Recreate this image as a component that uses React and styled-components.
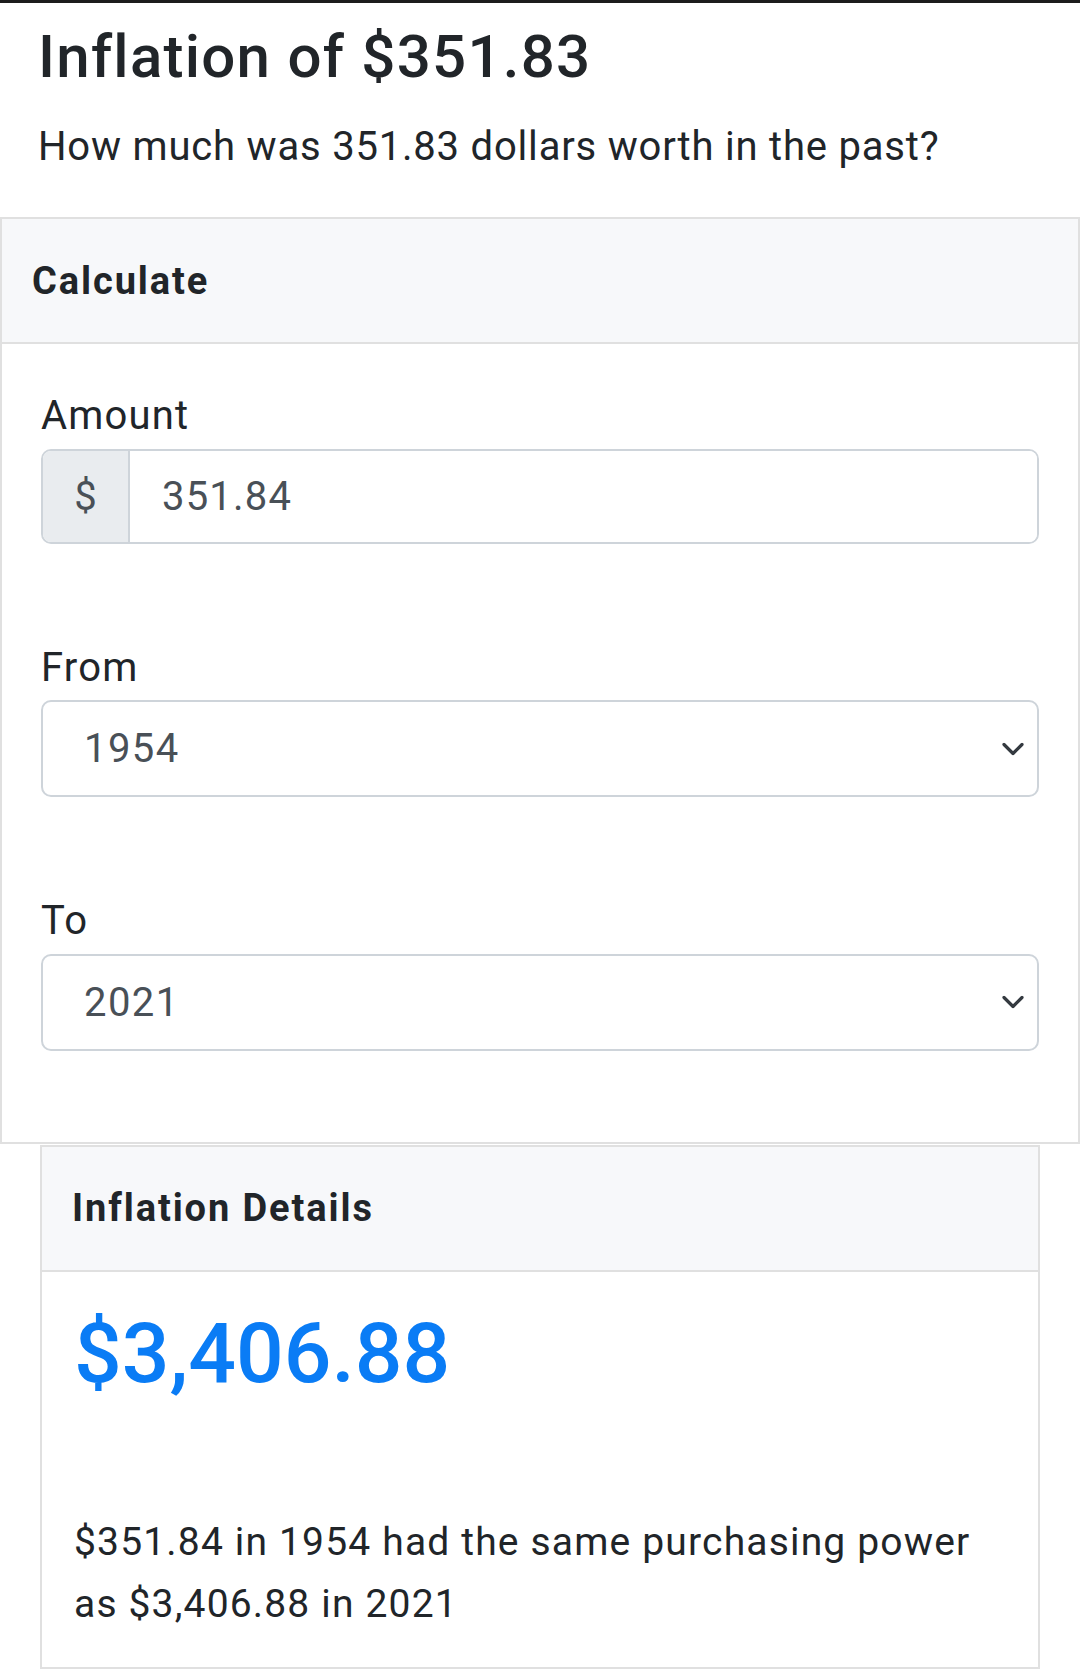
import React from "react";
import styled, { createGlobalStyle } from "styled-components";

const GlobalStyle = createGlobalStyle`
  * {
    box-sizing: border-box;
  }
  body {
    margin: 0;
    background: #ffffff;
    font-family: Roboto, "Liberation Sans", sans-serif;
    color: #212529;
  }
`;

function Chevron() {
  return (
    <svg width="22" height="13" viewBox="0 0 22 13" fill="none">
      <path
        d="M2 2 L11 11 L20 2"
        stroke="#343a40"
        strokeWidth="3.2"
        strokeLinecap="round"
        strokeLinejoin="round"
      />
    </svg>
  );
}

function YearSelect({ value }) {
  return (
    <SelectWrap>
      <Select defaultValue={value}>
        <option value={value}>{value}</option>
      </Select>
      <Arrow>
        <Chevron />
      </Arrow>
    </SelectWrap>
  );
}

export default function App() {
  return (
    <>
      <GlobalStyle />
      <Page>
        <Intro>
          <Title>Inflation of $351.83</Title>
          <Lead>How much was 351.83 dollars worth in the past?</Lead>
        </Intro>

        <Card>
          <CardHeader>Calculate</CardHeader>
          <FormBody>
            <Field>
              <Label>Amount</Label>
              <InputGroup>
                <Prepend>$</Prepend>
                <Input defaultValue="351.84" />
              </InputGroup>
            </Field>
            <Field>
              <Label>From</Label>
              <YearSelect value="1954" />
            </Field>
            <Field>
              <Label>To</Label>
              <YearSelect value="2021" />
            </Field>
          </FormBody>
        </Card>

        <Card inset>
          <CardHeader>Inflation Details</CardHeader>
          <ResultBody>
            <Result>$3,406.88</Result>
            <Summary>
              $351.84 in 1954 had the same purchasing power as $3,406.88 in
              2021
            </Summary>
          </ResultBody>
        </Card>
      </Page>
    </>
  );
}

const Page = styled.div`
  width: 1080px;
  min-height: 1678px;
  border-top: 3px solid #1c1c1c;
  display: flex;
  flex-direction: column;
`;

const Intro = styled.div`
  padding: 18px 38px 40px;
`;

const Title = styled.h1`
  margin: 0;
  font-size: 60px;
  font-weight: 500;
  line-height: 72px;
  letter-spacing: 0.021em;
  color: #212529;
`;

const Lead = styled.p`
  margin: 24px 0 0;
  font-size: 40px;
  line-height: 60px;
  letter-spacing: 0.02em;
  color: #212529;
`;

const Card = styled.div`
  display: flex;
  flex-direction: column;
  border: 2px solid #e0e0e0;
  background: #ffffff;
  margin: ${(p) => (p.inset ? "1px 40px 0" : "0")};
  width: ${(p) => (p.inset ? "1000px" : "1080px")};
`;

const CardHeader = styled.div`
  height: 125px;
  display: flex;
  align-items: center;
  padding: 0 30px;
  background: #f7f8fa;
  border-bottom: 2px solid #e0e0e0;
  font-size: 38px;
  font-weight: 700;
  letter-spacing: 0.05em;
  color: #212529;
`;

const FormBody = styled.div`
  padding: 43px 39px 91px;
  display: flex;
  flex-direction: column;
  gap: 95px;
`;

const Field = styled.div`
  display: flex;
  flex-direction: column;
`;

const Label = styled.label`
  font-size: 40px;
  line-height: 58px;
  margin-bottom: 3.5px;
  letter-spacing: 0.03em;
  color: #212529;
`;

const InputGroup = styled.div`
  display: flex;
  height: 95px;
  border: 2px solid #ced4da;
  border-radius: 10px;
  overflow: hidden;
`;

const Prepend = styled.span`
  width: 87px;
  display: flex;
  align-items: center;
  justify-content: center;
  background: #e9ecef;
  border-right: 2px solid #ced4da;
  font-size: 40px;
  color: #495057;
`;

const Input = styled.input`
  flex: 1;
  border: none;
  outline: none;
  padding: 0 0 0 32px;
  font-family: Roboto, "Liberation Sans", sans-serif;
  font-size: 40px;
  letter-spacing: 0.03em;
  color: #495057;
  background: #ffffff;
`;

const SelectWrap = styled.div`
  position: relative;
  height: 97px;
`;

const Select = styled.select`
  appearance: none;
  -webkit-appearance: none;
  width: 100%;
  height: 100%;
  border: 2px solid #ced4da;
  border-radius: 10px;
  background: #ffffff;
  padding: 0 60px 0 41px;
  font-family: Roboto, "Liberation Sans", sans-serif;
  font-size: 40px;
  letter-spacing: 0.035em;
  color: #495057;
  outline: none;
`;

const Arrow = styled.span`
  position: absolute;
  right: 15px;
  top: 50%;
  transform: translateY(-50%);
  display: flex;
  pointer-events: none;
`;

const ResultBody = styled.div`
  padding: 32px 32px 32px;
  display: flex;
  flex-direction: column;
`;

const Result = styled.div`
  font-size: 84px;
  font-weight: 500;
  line-height: 1.2;
  color: #0a7cf5;
`;

const Summary = styled.p`
  margin: 107px 0 0;
  font-size: 39px;
  line-height: 62px;
  letter-spacing: 0.03em;
  color: #212529;
`;
